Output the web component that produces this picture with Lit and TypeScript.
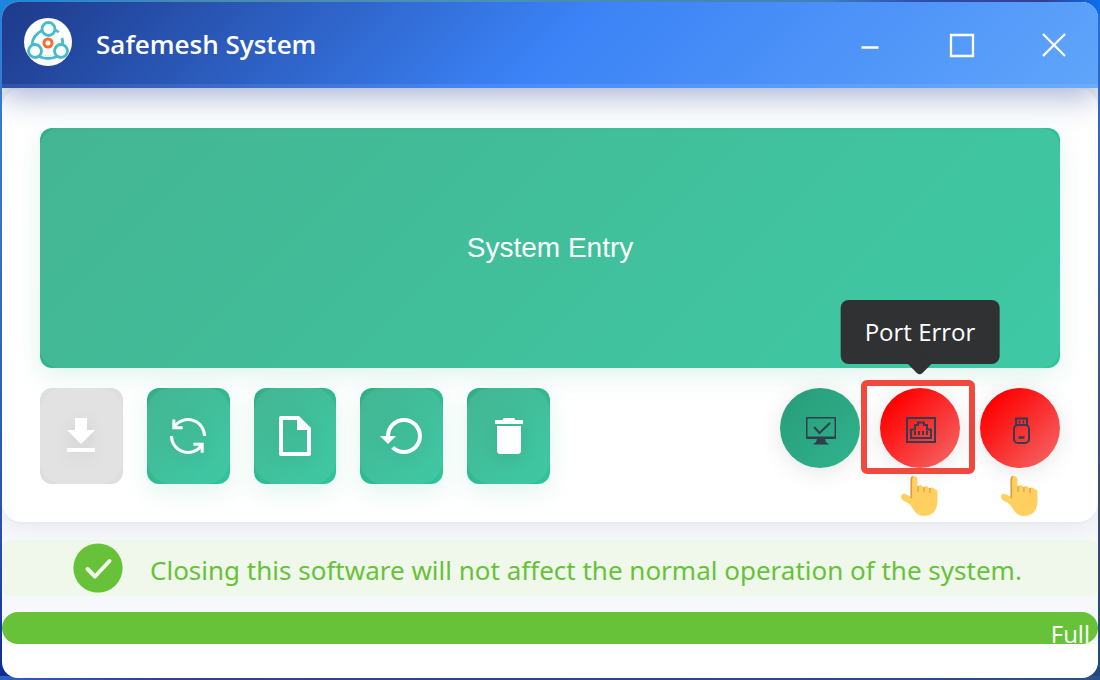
import { LitElement, html, css, svg } from "lit";
import { customElement } from "lit/decorators.js";

const logo = svg`<svg class="logo" viewBox="0 0 48 48" aria-hidden="true">
  <circle cx="24" cy="24" r="24" fill="#fff"/>
  <g fill="none" stroke="#45bccb" stroke-width="2.800">
    <path d="M18 12.500Q8.500 17.500 8 27M31 12Q33.500 12.500 34.500 14.500M38 20Q39 23 38.500 27M15 38.500Q24 42.500 33 38.500"/>
    <circle cx="24.500" cy="11" r="6.500"/><circle cx="11" cy="33" r="6.500"/><circle cx="37" cy="33" r="6.500"/>
  </g>
  <circle cx="24" cy="25" r="4" fill="none" stroke="#ff6a2c" stroke-width="3"/>
</svg>`;

const tools = [
  { label: "Download", disabled: true, icon: svg`<path fill="currentColor" d="M19 9h-4V3H9v6H5l7 7zM5 18v2h14v-2z"/>` },
  { label: "Refresh", disabled: false, icon: svg`<path fill="none" stroke="currentColor" stroke-width="1.500" d="M3.700 12a8.300 8.300 0 0 0 15 4.800M20.300 12A8.300 8.300 0 0 0 5.300 7.200M4.900 3.700v4.200h4.400M14.700 16.100h4.400v4.300"/>` },
  { label: "New file", disabled: false, icon: svg`<path fill="currentColor" d="M14 2H5c-.600 0-1 .400-1 1v18c0 .600.400 1 1 1h14c.600 0 1-.400 1-1V8l-6-6zM6 20V4h7v5h5v11H6z"/>` },
  { label: "Restore", disabled: false, icon: svg`<path fill="currentColor" d="M13 3a9 9 0 0 0-9 9H1l4 4 4-4H6c0-3.870 3.130-7 7-7s7 3.130 7 7-3.130 7-7 7c-1.930 0-3.680-.790-4.940-2.060l-1.420 1.420A8.950 8.950 0 0 0 13 21a9 9 0 0 0 0-18z"/>` },
  { label: "Delete", disabled: false, icon: svg`<path fill="currentColor" d="M6 19.500c0 .800.700 1.500 1.500 1.500h9c.800 0 1.500-.700 1.500-1.500V7H6zM19 4h-3.800l-.600-1H9.400l-.600 1H5v2h14z"/>` },
];

const monitor = svg`<path fill="currentColor" fill-rule="evenodd" d="M2 1h28q1 0 1 1v20q0 1-1 1H20l1 3 3 2.500H8L11 26l1-3H2q-1 0-1-1V2q0-1 1-1zM2.500 2.500v18h27v-18z"/><path d="M9 11l5.500 6L25 7" fill="none" stroke="currentColor" stroke-width="2"/>`;
const port = svg`<g fill="none" stroke="currentColor" stroke-width="2"><path d="M2 2h28v24H2z"/><path d="M6 22V13.500h4V9h3V6.500h6V9h3v4.500h4V22z"/><path d="M10 15v4M14 15v4M18 15v4M22 15v4"/></g>`;
const usb = svg`<g fill="none" stroke="currentColor" stroke-width="2"><path d="M11 9V2.500h11V9"/><rect x="9" y="9" width="15" height="18" rx="4"/><path d="M13.500 21.500h6" stroke-width="2.500"/><path d="M14.500 4.500v3M18.500 4.500v3" stroke-width="1.500"/></g>`;

const hand = svg`<svg class="hand" viewBox="0 0 40 42" aria-hidden="true">
  <path fill="#ffd05f" d="M12 22V4.500Q12 1 15 1t3.500 3.500V12q1-2 3-2t3 2.500q1-2 3-1.500t2.500 2.500q1-1.500 3-1t3 2q2.500-.500 2.500 3v8Q38 41 25 41q-7 0-11-7-3-6-8-7.500Q2 25 2 21q1-3 4-2t6 3z"/>
  <path fill="none" stroke="#df9a3c" stroke-width="1.700" d="M12.300 23V4Q12.500 1.800 14 1.500"/>
  <path fill="none" stroke="#e9a845" stroke-width="1.500" d="M19 11v6M25 12v5M31 13v5"/>
</svg>`;

@customElement("app-root")
export class AppRoot extends LitElement {
  static styles = css`
    :host {
      display: block;
      box-sizing: border-box;
      min-height: 100vh;
      padding: 2px;
      background: linear-gradient(90deg, #2f5fbe 0%, #35418f 15%, #2f478f 80%, #2a5288 100%) bottom / 100% 4px no-repeat,
        linear-gradient(90deg, #1c85e0 0, #4a8bb0 20%, #4a90b8 45%, #4080b8 75%, #2f50b0 83%, #353f90 95%, #0a6ff0 100%) top / 100% 16px no-repeat,
        linear-gradient(180deg, #2f80dd, #3a75c0 30%, #2950a8 80%, #0a2a95) left / 50% 100% no-repeat,
        linear-gradient(180deg, #2470e0, #3a62a5 30%, #34506f 75%, #1f4a80) right / 50% 100% no-repeat;
      font-family: "Open Sans", "Noto Sans", sans-serif;
    }
    * { box-sizing: border-box; }
    button { border: 0; margin: 0; padding: 0; font: inherit; color: inherit; background: none; cursor: pointer; }
    .window {
      display: flex;
      flex-direction: column;
      min-height: calc(100vh - 4px);
      border-radius: 16px;
      overflow: hidden;
      background: #fff;
    }
    .titlebar {
      display: flex;
      align-items: center;
      height: 86px;
      padding: 0 14px 6px 22px;
      color: #fff;
      background: linear-gradient(135deg, #1e3a8a 0%, #3b82f6 50%, #60a5fa 100%);
      box-shadow: inset 0 -4px rgba(255, 255, 255, 0.08), 0 8px 32px rgba(30, 58, 138, 0.4);
      position: relative;
      z-index: 1;
    }
    .logo { width: 48px; height: 48px; }
    .title { flex: 1; margin: 4px 0 0 24px; font-size: 26px; font-weight: 600; line-height: 36px; }
    .controls { display: flex; gap: 32px; margin-top: 6px; }
    .control { display: grid; place-items: center; width: 60px; height: 48px; }
    .control svg { width: 28px; height: 28px; }
    .body { background: #f7f8fb; }
    .card {
      padding: 40px 38px 38px;
      border-radius: 20px;
      background: #fff;
      box-shadow: 0 2px 2px rgba(0, 0, 0, 0.02), 0 4px 24px rgba(0, 0, 0, 0.07);
    }
    .action {
      position: relative;
      color: #fff;
      border-radius: 12px;
      background: linear-gradient(135deg, #32ae88, #30c59b);
      box-shadow: 0 8px 24px rgba(52, 190, 150, 0.15);
      overflow: hidden;
      isolation: isolate;
    }
    .action::before {
      content: "";
      position: absolute;
      inset: 0;
      z-index: -1;
      border-radius: 24px;
      background: linear-gradient(135deg, #44b592, #3ec9a4);
      box-shadow: 0 0 2px #3abb96;
    }
    .entry { display: block; width: 100%; height: 240px; font: 28px/32px "Liberation Sans", Arial, sans-serif; }
    .entry::before { border-radius: 20px; }
    .row { display: flex; justify-content: space-between; align-items: flex-start; margin-top: 20px; }
    .tools { display: grid; grid-template-columns: repeat(5, 1fr); gap: 24px; width: 50%; }
    .tool { display: grid; place-items: center; height: 96px; }
    .tool svg { width: 48px; height: 48px; filter: drop-shadow(0 4px 8px rgba(0, 0, 0, 0.08)); }
    .tool:disabled { color: #fff; background: #dedede; box-shadow: none; cursor: default; }
    .tool:disabled::before { background: #e2e2e2; box-shadow: none; }
    .states { display: flex; gap: 20px; }
    .state { position: relative; }
    .light {
      display: grid;
      place-items: center;
      width: 80px;
      height: 80px;
      padding: 6px 0 0 2px;
      border-radius: 50%;
      color: #303e50;
      background: linear-gradient(135deg, #ff0000 15%, #f56060 90%);
      box-shadow: 0 4px 24px rgba(0, 0, 0, 0.1);
    }
    .light.ok { background: linear-gradient(135deg, #289c78, #2fb48e); }
    .light svg { width: 32px; height: 30px; }
    .hand { position: absolute; top: 87px; left: 19px; width: 40px; height: 42px; }
    .frame { position: absolute; inset: -8px -15px -6px -19px; border: 6px solid #f1493e; border-radius: 6px; pointer-events: none; }
    .tooltip {
      position: absolute;
      bottom: 104px;
      left: 50%;
      transform: translateX(-50%);
      padding: 14px 24px;
      border-radius: 8px;
      color: #fff;
      background: #303133;
      font-size: 24px;
      line-height: 36px;
      white-space: nowrap;
    }
    .tooltip::after {
      content: "";
      position: absolute;
      left: 50%;
      bottom: -8px;
      width: 18px;
      height: 18px;
      margin-left: -9px;
      border-radius: 0 0 4px 0;
      background: #303133;
      transform: rotate(45deg);
    }
    .notice {
      display: flex;
      align-items: center;
      gap: 26px;
      height: 56px;
      margin: 18px 0 16px;
      padding-left: 70px;
      border-radius: 8px;
      color: #67c23a;
      background: #f0f8eb;
      font-family: "Noto Sans", "Open Sans", sans-serif;
      font-size: 26px;
      line-height: 40px;
      white-space: nowrap;
    }
    .notice svg { width: 52px; height: 52px; flex: none; }
    .notice p { margin: 4px 0 0; }
    .progress { height: 32px; border-radius: 16px; background: #67c23a; color: #fff; text-align: right; padding: 6px 8px 0; font-size: 24px; line-height: 32px; }
  `;

  render() {
    return html`
      <main class="window">
        <header class="titlebar">
          ${logo}
          <div class="title">Safemesh System</div>
          <div class="controls">
            <button class="control" aria-label="Minimize"><svg viewBox="0 0 28 28"><path d="M5.500 16.500h17" stroke="#fff" stroke-width="2.500"/></svg></button>
            <button class="control" aria-label="Maximize"><svg viewBox="0 0 28 28"><path d="M3 4h22v21H3z" fill="none" stroke="#fff" stroke-width="2.300"/></svg></button>
            <button class="control" aria-label="Close"><svg viewBox="0 0 28 28"><path d="M3 3l22 22M25 3L3 25" stroke="#fff" stroke-width="2.300"/></svg></button>
          </div>
        </header>
        <div class="body">
          <section class="card">
            <button class="action entry">System Entry</button>
            <div class="row">
              <div class="tools">
                ${tools.map((t) => html`<button class="action tool" aria-label=${t.label} ?disabled=${t.disabled}><svg viewBox="0 0 24 24">${t.icon}</svg></button>`)}
              </div>
              <div class="states">
                <div class="state"><button class="light ok" aria-label="System status"><svg viewBox="0 0 32 30">${monitor}</svg></button></div>
                <div class="state">
                  <button class="light" aria-label="Port status" aria-describedby="port-tip"><svg viewBox="0 0 32 30">${port}</svg></button>
                  <div class="frame"></div>
                  ${hand}
                  <div class="tooltip" id="port-tip" role="tooltip">Port Error</div>
                </div>
                <div class="state"><button class="light" aria-label="USB status"><svg viewBox="0 0 32 30">${usb}</svg></button>${hand}</div>
              </div>
            </div>
          </section>
          <div class="notice" role="status">
            <svg viewBox="0 0 52 52" aria-hidden="true"><circle cx="26" cy="26" r="24.600" fill="#67c23a"/><path d="M15.500 27l7.500 7.500L37.500 19" fill="none" stroke="#f0f8eb" stroke-width="4" stroke-linecap="round" stroke-linejoin="round"/></svg>
            <p>Closing this software will not affect the normal operation of the system.</p>
          </div>
          <div class="progress" role="progressbar" aria-valuenow="100" aria-valuemin="0" aria-valuemax="100" aria-label="Progress">Full</div>
        </div>
      </main>
    `;
  }
}
